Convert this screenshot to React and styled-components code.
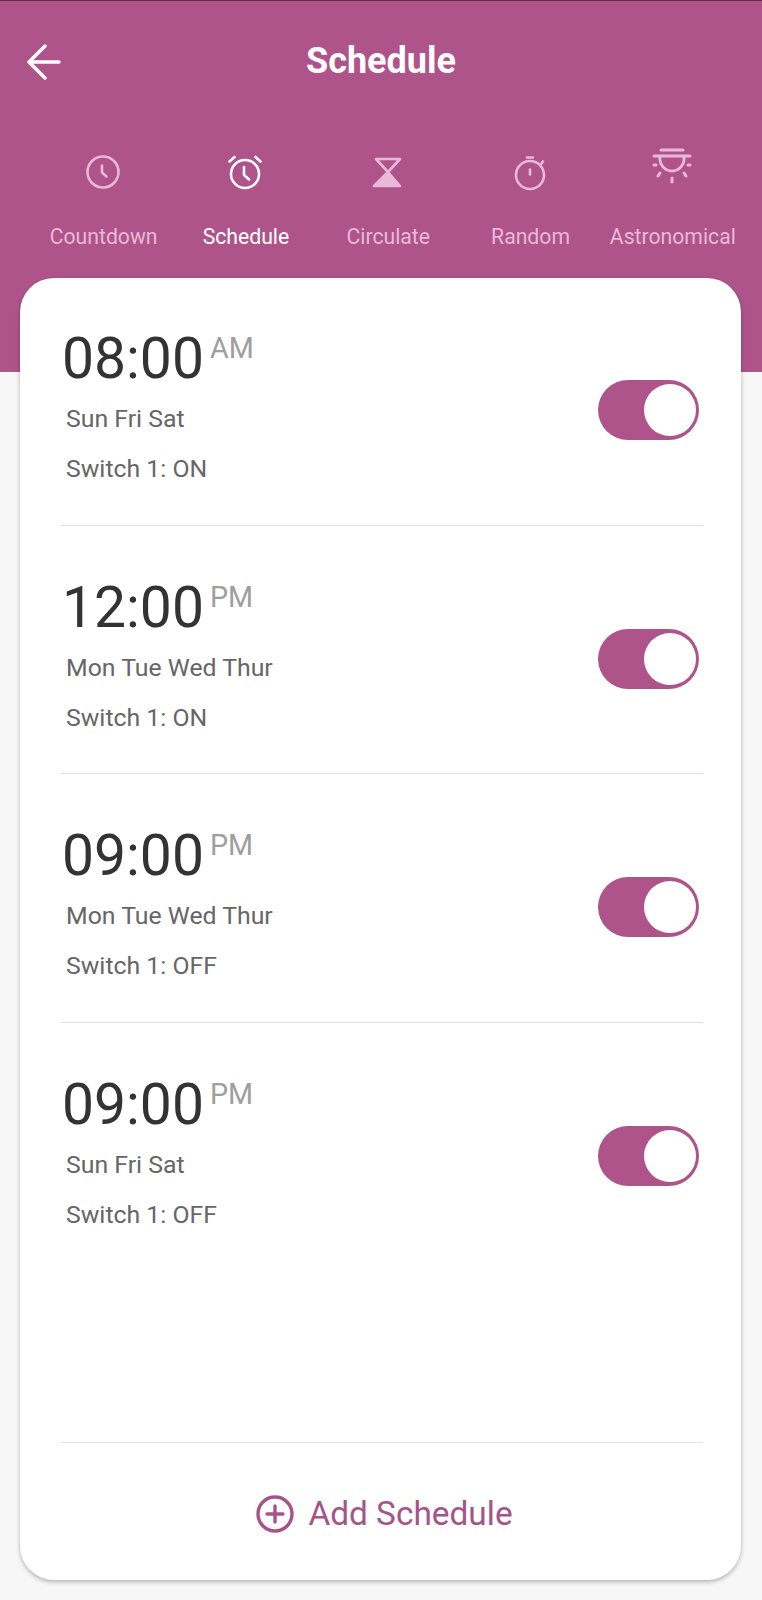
import React from 'react';
import styled, { createGlobalStyle } from 'styled-components';

const GlobalStyle = createGlobalStyle`
  html, body {
    margin: 0;
    padding: 0;
    background: #f7f7f7;
    font-family: Roboto, "Liberation Sans", sans-serif;
  }
`;

const Page = styled.div`
  width: 762px;
  height: 1600px;
  overflow: hidden;
  background: #f7f7f7;
`;

const Header = styled.header`
  height: 372px;
  box-sizing: border-box;
  background: #ae548b;
  border-top: 1px solid #5e2c4a;
  display: flex;
  flex-direction: column;
`;

const TitleBar = styled.div`
  height: 122px;
  display: grid;
  grid-template-columns: 27px 34px 1fr 61px;
  align-items: center;
  color: #fff;
`;

const BackIcon = styled.svg`
  grid-column: 2;
  width: 34px;
  height: 36px;
  fill: none;
  stroke: #fff;
  stroke-width: 3.4;
  stroke-linecap: round;
  stroke-linejoin: round;
`;

const Title = styled.h1`
  grid-column: 3;
  margin: 0 0 2px;
  text-align: center;
  font-size: 36px;
  font-weight: 700;
`;

const Tabs = styled.nav`
  display: grid;
  grid-template-columns: repeat(5, 142.3px);
  padding: 24px 0 0 32px;
`;

const Tab = styled.div`
  display: flex;
  flex-direction: column;
  align-items: center;
  color: ${({ $active }) => ($active ? '#ffffff' : '#eab8d8')};
`;

const TabIcon = styled.svg`
  width: 44px;
  height: 44px;
  margin-top: 3px;
  fill: none;
  stroke: currentColor;
  stroke-width: 2.6;
  stroke-linecap: round;
  stroke-linejoin: round;
`;

const LampIcon = styled(TabIcon)`
  margin-top: -2px;
  margin-bottom: 5px;
  stroke-width: 3;
`;

const TabLabel = styled.span`
  margin: 30px 0 0 1px;
  font-size: 21.2px;
  line-height: 26px;
  white-space: nowrap;
`;

const Card = styled.main`
  width: 721px;
  height: 1302px;
  box-sizing: border-box;
  margin: -94px 0 0 20px;
  background: #fff;
  border-radius: 34px;
  box-shadow: 0 2px 4px rgba(0, 0, 0, 0.28);
  padding: 0 38px 0 41px;
  display: flex;
  flex-direction: column;
`;

const Row = styled.section`
  height: 247.5px;
  margin-bottom: 1px;
  flex: none;
  box-sizing: border-box;
  display: flex;
  justify-content: space-between;
  align-items: flex-start;
  border-bottom: ${({ $last }) => ($last ? 'none' : '1px solid #dedede')};
`;

const RowText = styled.div`
  display: flex;
  flex-direction: column;
  padding: 48px 0 0 1px;
`;

const TimeLine = styled.div`
  display: flex;
  align-items: flex-start;
  height: 68px;
`;

const Time = styled.span`
  font-size: 57px;
  line-height: 66px;
  color: #333;
`;

const Meridiem = styled.span`
  margin: 4px 0 0 6px;
  font-size: 28.7px;
  line-height: 36px;
  color: #9e9e9e;
`;

const Detail = styled.div`
  margin-left: 4px;
  font-size: 24.8px;
  line-height: 50px;
  color: #666;
`;

const Toggle = styled.div`
  width: 101px;
  height: 60px;
  box-sizing: border-box;
  margin: 102px 4px 0 0;
  padding: 4px 3px 4px 0;
  border-radius: 30px;
  background: #ae548b;
  display: flex;
  justify-content: flex-end;
`;

const Knob = styled.span`
  width: 52px;
  height: 52px;
  border-radius: 50%;
  background: #fff;
`;

const Spacer = styled.div`
  flex: 1;
`;

const AddRow = styled.button`
  height: 138px;
  flex: none;
  border: none;
  border-top: 1px solid #e3e3e3;
  background: none;
  display: flex;
  align-items: center;
  justify-content: center;
  gap: 14px;
  padding: 4px 0 0 5px;
  color: #a4548a;
  font-family: inherit;
  font-size: 33.4px;
`;

const PlusIcon = styled.svg`
  width: 38px;
  height: 38px;
  fill: none;
  stroke: currentColor;
  stroke-width: 3.4;
  stroke-linecap: round;
`;

const ClockGlyph = () => (
  <TabIcon viewBox="0 0 44 44">
    <circle cx="22" cy="22" r="15.5" />
    <path d="M21 15.5v7l4.5 4" />
  </TabIcon>
);

const AlarmGlyph = () => (
  <TabIcon viewBox="0 0 44 44">
    <circle cx="22" cy="24" r="14" />
    <path d="M21 17v8l5 4.5M6.5 11.5l5-4.5M37.5 11.5l-5-4.5" />
  </TabIcon>
);

const HourglassGlyph = () => (
  <TabIcon viewBox="0 0 44 44">
    <path d="M10 9h24l-12 13z" />
    <path d="M22 22l12 14H8z" fill="currentColor" />
  </TabIcon>
);

const TimerGlyph = () => (
  <TabIcon viewBox="0 0 44 44">
    <circle cx="22" cy="25" r="14" />
    <path d="M19 7.5h6M22 19.5v5M33 14l2-2.5" />
  </TabIcon>
);

const LampGlyph = () => (
  <LampIcon viewBox="0 0 44 44">
    <path d="M11 5h22M4 11h36M10 11c-1 9 5 15 12 15s13-6 12-15M4 20h2M38 20h2M8 31l2-3M36 31l-2-3M22 33v4" />
  </LampIcon>
);

const tabs = [
  { label: 'Countdown', Glyph: ClockGlyph },
  { label: 'Schedule', Glyph: AlarmGlyph, active: true },
  { label: 'Circulate', Glyph: HourglassGlyph },
  { label: 'Random', Glyph: TimerGlyph },
  { label: 'Astronomical', Glyph: LampGlyph },
];

const schedules = [
  { time: '08:00', meridiem: 'AM', days: 'Sun Fri Sat', status: 'Switch 1: ON' },
  { time: '12:00', meridiem: 'PM', days: 'Mon Tue Wed Thur', status: 'Switch 1: ON' },
  { time: '09:00', meridiem: 'PM', days: 'Mon Tue Wed Thur', status: 'Switch 1: OFF' },
  { time: '09:00', meridiem: 'PM', days: 'Sun Fri Sat', status: 'Switch 1: OFF' },
];

const App = () => (
  <Page>
    <GlobalStyle />
    <Header>
      <TitleBar>
        <BackIcon viewBox="0 0 34 36">
          <path d="M32 18H3M18 2L2 18l16 16" />
        </BackIcon>
        <Title>Schedule</Title>
      </TitleBar>
      <Tabs>
        {tabs.map(({ label, Glyph, active }) => (
          <Tab key={label} $active={active}>
            <Glyph />
            <TabLabel>{label}</TabLabel>
          </Tab>
        ))}
      </Tabs>
    </Header>
    <Card>
      {schedules.map((item, i) => (
        <Row key={i} $last={i === schedules.length - 1}>
          <RowText>
            <TimeLine>
              <Time>{item.time}</Time>
              <Meridiem>{item.meridiem}</Meridiem>
            </TimeLine>
            <Detail>{item.days}</Detail>
            <Detail>{item.status}</Detail>
          </RowText>
          <Toggle>
            <Knob />
          </Toggle>
        </Row>
      ))}
      <Spacer />
      <AddRow>
        <PlusIcon viewBox="0 0 38 38">
          <circle cx="19" cy="19" r="17" />
          <path d="M19 11v16M11 19h16" />
        </PlusIcon>
        Add Schedule
      </AddRow>
    </Card>
  </Page>
);

export default App;
